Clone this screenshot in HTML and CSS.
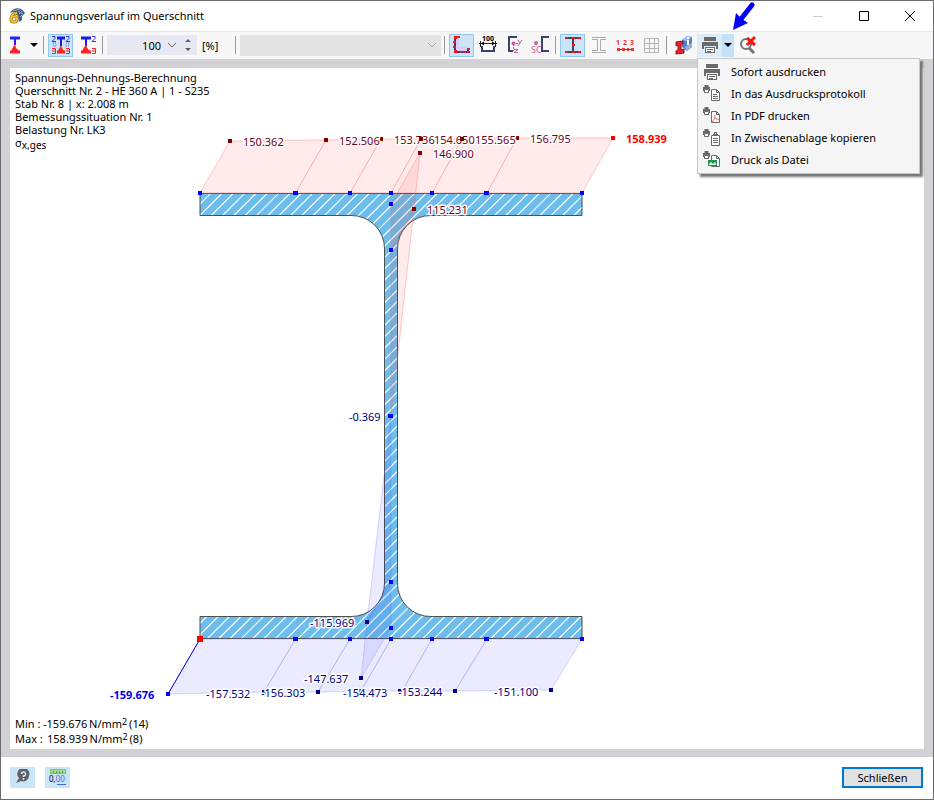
FILE: index.html
```html
<!DOCTYPE html>
<html lang="de">
<head>
<meta charset="utf-8">
<title>Spannungsverlauf im Querschnitt</title>
<link rel="stylesheet" href="styles.css">
</head>
<body>
<svg class="defs" aria-hidden="true">
  <symbol id="printer" viewBox="0 0 18 18">
    <path fill="#696969" d="M3 1h12v4H3zM1 6h16v7h-2v-3H3v3H1zM4 11h10v6H4z"/>
    <path fill="#fff" d="M5 12h8v4H5z"/><path fill="#696969" d="M6 13h6v1H6zM6 15h4v1H6z"/>
  </symbol>
  <symbol id="small-printer" viewBox="0 0 8 8">
    <path fill="#696969" d="M1.500 0h4v2h-4zM0 2h7v4H6V4H1v2H0z"/><path fill="#fff" stroke="#696969" d="M1.500 4.500h4v3h-4z"/>
  </symbol>
  <symbol id="sheet" viewBox="0 0 9 12">
    <path fill="#fff" stroke="#696969" d="M.5.5h5l3 3v8h-8zM5.500.5v3h3"/>
  </symbol>
</svg>
<div class="window">
  <header class="titlebar">
    <svg class="app-icon" width="16" height="16" viewBox="0 0 16 16">
      <path d="M1 5C3 1 8-1 12 1c2 1 3 3 4 4l-3 3v4l-3 2-1-6-5-4z" fill="#41617f"/>
      <path d="M4 3l7-2M9 3l5 3M10 6l3-3M11 9l2-2" stroke="#8fafc9"/>
      <path d="M8 5C4 5 2 8 2 11c0 4 6 4 6 0 0-3-4-3-6-1" fill="none" stroke="#80601a" stroke-width="3"/>
      <path d="M8 5C4 5 2 8 2 11c0 4 6 4 6 0 0-3-4-3-6-1" fill="none" stroke="#f5bd2d" stroke-width="2"/>
    </svg>
    <h1>Spannungsverlauf im Querschnitt</h1>
    <div class="window-buttons">
      <button aria-label="Minimieren" disabled><svg width="12" height="12"><path d="M1 6.500h10" stroke="#ccc"/></svg></button>
      <button aria-label="Maximieren"><svg width="12" height="12"><path d="M1.500 1.500h9v9h-9z" fill="none" stroke="#000"/></svg></button>
      <button aria-label="Fenster schließen"><svg width="12" height="12"><path d="M1 1l10 10M11 1L1 11" stroke="#000"/></svg></button>
    </div>
  </header>

  <div class="toolbar" role="toolbar" aria-label="Werkzeuge">
    <button class="tool" aria-label="Spannung"><svg width="20" height="20"><path d="M5 3h10" stroke="#2222f5" stroke-width="3"/><path d="M10 3v7" stroke="#2222f5" stroke-width="2"/><path d="M5 17h10" stroke="#ff2020" stroke-width="3"/><path d="M10 9l-4 7h8l-3-3z" fill="#ff2020"/></svg></button>
    <button class="drop" aria-label="Spannung wählen"><svg width="8" height="4"><path d="M0 0h8L4 4z"/></svg></button>
    <span class="sep"></span>
    <button class="tool on" aria-label="Verlauf"><svg width="20" height="20"><path d="M6 3h8" stroke="#1919e8" stroke-width="3"/><path d="M10 3v8" stroke="#1919e8" stroke-width="2"/><path d="M6 17h8" stroke="#f22" stroke-width="3"/><path d="M10 10l-3 6h6l-2-3z" fill="#f22"/><path d="M3 7q-2 3 0 5M17 7q2 3 0 5M4 7q2 3 0 5M16 7q-2 3 0 5" fill="none" stroke="#8d9af0"/><g fill="none" stroke="#3333ee"><path d="M1 1.500h3v2L1 6.500h4M15 1.500h3v2l-3 3h4"/></g><g fill="none" stroke="#ff2020"><path d="M1 13.500h3.500v5H1m0-2.500h3M15 13.500h3.500v5H15m0-2.500h3"/></g></svg></button>
    <button class="tool" aria-label="Werte"><svg width="20" height="20" viewBox="-2 0 20 20"><path d="M2 3h10" stroke="#1919e8" stroke-width="3"/><path d="M7 3v8" stroke="#1919e8" stroke-width="2"/><path d="M2 17h10" stroke="#f22" stroke-width="3"/><path d="M7 9l-4 7h8l-3-3z" fill="#f22"/><path d="M13 1.500h3v2l-3 3h4" fill="none" stroke="#3333ee"/><path d="M13 13.500h3.500v5H13m0-2.500h3" fill="none" stroke="#ff2020"/></svg></button>
    <span class="sep"></span>
    <span class="spin">
      <input type="text" value="100" aria-label="Skalierung in Prozent">
      <button aria-label="Skalierung wählen"><svg width="10" height="6"><path d="M1 1l4 4 4-4" fill="none" stroke="#666"/></svg></button>
      <button aria-label="Skalierung ändern"><svg width="6" height="12"><path d="M0 3h6L3 0zM0 9h6l-3 3z" fill="#606060"/></svg></button>
    </span>
    <span class="unit">[%]</span>
    <span class="sep"></span>
    <span class="combo"><select aria-label="Auswahl" disabled><option></option></select><svg width="10" height="6"><path d="M1 1l4 4 4-4" fill="none" stroke="#aaa"/></svg></span>
    <span class="sep"></span>
    <button class="tool on" aria-label="Umriss"><svg width="20" height="20"><path d="M2 2h5v10h9v6H2z" fill="#d9ccff"/><path d="M6 2H3v15h13v-3" fill="none" stroke="#34407a" stroke-width="2"/><path d="M2 1h3v3H2zM5 1h3v2H5zM1 6h3v2H1zM1 11h3v2H1zM2 15h3v3H2zM7 16h3v2H7zM11 16h3v2h-3zM15 13h3v2h-3zM15 16h3v2h-3z" fill="#e91919"/></svg></button>
    <button class="tool" aria-label="Bemaßung"><svg width="20" height="20"><path d="M1 8.500h18M2.500 6v6M17.500 6v6" stroke="#222"/><path d="M3 8.500l3-2v4zM17 8.500l-3-2v4z"/><path d="M4 11v5h12v-5" fill="#fff" stroke="#34406b" stroke-width="2"/><text class="tiny" x="10" y="6" text-anchor="middle">100</text></svg></button>
    <button class="tool" aria-label="Hauptachsen"><svg width="20" height="20"><path d="M13 2H5v14h4" fill="none" stroke="#39456d" stroke-width="2"/><path d="M9 8.500h6M9.500 9v7" stroke="#cd5f9c" stroke-dasharray="2 1"/><circle cx="9.500" cy="8.500" r="2" fill="#cd5f9c"/><path d="M14 5l2 3 2-3M16 8l-2 3M10 14.500h4l-4 3h4" fill="none" stroke="#cd5f9c"/></svg></button>
    <button class="tool" aria-label="Schubmittelpunkt"><svg width="20" height="20"><path d="M19 2h-7v14h7" fill="none" stroke="#39456d" stroke-width="2"/><circle cx="6" cy="8" r="2" fill="#cd5f9c"/><text class="sc" x="1" y="18">SC</text></svg></button>
    <span class="sep"></span>
    <button class="tool on" aria-label="Spannungspunkte"><svg width="20" height="20"><path d="M3 3h14M3 17h14M10 3v14" stroke="#39456d" stroke-width="2"/><path d="M2 2h3v2H2zM9 2h3v2H9zM15 2h3v2h-3zM9 9h3v2H9zM2 16h3v2H2zM9 16h3v2H9zM15 16h3v2h-3z" fill="#f11"/></svg></button>
    <button class="tool" aria-label="Profil"><svg width="20" height="20"><path d="M3 2.500h14M3 4.500h5.500v11H3M17 4.500h-5.500v11H17M3 17.500h14" fill="none" stroke="#aaa"/></svg></button>
    <button class="tool" aria-label="Nummerierung"><svg width="20" height="20"><path d="M2 14.500h16" stroke="#39456d"/><path d="M2 13h3v3H2zM7 13h3v3H7zM12 13h2v3h-2zM16 13h3v3h-3z" fill="#e33"/><text class="red-number" x="1" y="10">1</text><text class="red-number" x="8" y="10">2</text><text class="red-number" x="15" y="10">3</text></svg></button>
    <button class="tool" aria-label="Raster"><svg width="20" height="20"><path d="M3.500 3.500h14v14h-14zM8.500 3v15M13.500 3v15M3 8.500h15M3 13.500h15" fill="none" stroke="#b5b5b5"/></svg></button>
    <span class="sep"></span>
    <button class="tool" aria-label="Querschnittsinformation"><svg width="20" height="20"><path d="M8 5l5-4 5 1v10l-5 4-5-4z" fill="#5184cf"/><path d="M8 5l5-4 5 1-5 4z" fill="#9dc0ef"/><path d="M11 12l7-4v4l-5 4z" fill="#97afe2"/><path d="M13 3h2M14 5v5" stroke="#fff" stroke-width="2"/><path d="M2 7l7-1v3l-2 1v5l3-1v4l-8 1v-3l2-1v-5l-2 1z" fill="#ef2222" stroke="#7d1730"/></svg></button>
    <span class="print">
      <button class="print-main" aria-label="Drucken"><svg width="18" height="18"><use href="#printer"/></svg></button><button class="print-drop" aria-label="Druckmenü" aria-expanded="true"><svg width="8" height="4"><path d="M0 0h8L4 4z"/></svg></button>
      <svg class="pointer" width="24" height="30" viewBox="0 0 24 30"><path d="M21 4L10 18" stroke="#0000f5" stroke-width="5" stroke-linecap="round"/><path d="M2 29L5 12l6 6 6 4z" fill="#0000f5"/></svg>
      <span class="menu" role="menu">
        <button role="menuitem"><svg width="18" height="18"><use href="#printer"/></svg>Sofort ausdrucken</button>
        <button role="menuitem"><svg width="18" height="18"><use href="#small-printer" width="8" height="8"/><use href="#sheet" x="8" y="4" width="9" height="12"/><path d="M10 9.500h4M10 11.500h5M10 13.500h5" stroke="#696969"/></svg>In das Ausdrucksprotokoll</button>
        <button role="menuitem"><svg width="18" height="18"><use href="#small-printer" width="8" height="8"/><use href="#sheet" x="8" y="4" width="9" height="12"/><path d="M12 8v3l-3 4M12 11l4 2" fill="none" stroke="#f66"/></svg>In PDF drucken</button>
        <button role="menuitem"><svg width="18" height="18"><use href="#small-printer" width="8" height="8"/><path d="M8.500 6.500h8v10h-8z" fill="#fff" stroke="#696969"/><path d="M10 7V5h1V3h3v2h1v2z" fill="#696969"/><path d="M12 4h1v1h-1z" fill="#fff"/><path d="M10 9.500h5M10 11.500h5M10 13.500h5" stroke="#696969"/></svg>In Zwischenablage kopieren</button>
        <button role="menuitem"><svg width="18" height="18"><use href="#small-printer" width="8" height="8"/><use href="#sheet" x="8" y="4" width="9" height="12"/><path d="M5 9h9v6H5z" fill="#269157"/><path d="M6 13l2-2 2 2 2-2 1 2v1H6z" fill="#d9f3dd"/></svg>Druck als Datei</button>
      </span>
    </span>
    <button class="tool" aria-label="Auswahl zurücksetzen"><svg width="20" height="20"><circle cx="8" cy="9" r="5" fill="none" stroke="#737373" stroke-width="2"/><path d="M11 13l5 5" stroke="#737373" stroke-width="3"/><path d="M8 9h4l-2-2" fill="none" stroke="#737373"/><path d="M9 3l8 7M17 2l-8 8" stroke="#f21616" stroke-width="3"/></svg></button>
  </div>

  <main class="stage">
    <div class="canvas">
      <svg class="diagram" viewBox="10 68 914 681" preserveAspectRatio="xMinYMin meet" role="img" aria-label="Spannungsverlauf am Profil HE 360 A">
        <defs>
          <pattern id="hatch" width="34" height="34" patternUnits="userSpaceOnUse"><rect width="34" height="34" fill="#6cbdeb"/><path d="M-2 9.300L9.300-2M-2 20.700L20.700-2M-2 32L32-2M5.300 36L36 5.300M16.700 36L36 16.700M28 36L36 28" stroke="#fff" stroke-width="1.200"/></pattern>
        </defs>
        <path class="profile" d="M200 193.500H582V215.500H431A33 33 0 0 0 397.500 249V583A33 33 0 0 0 431 616.500H582V638.500H200V616.500H351A33 33 0 0 0 384.500 583V249A33 33 0 0 0 351 215.500H200Z"/>
        <g class="tension">
          <path d="M200 193L230 141 326 140 381 139 421 139 462 139 517 138 613 138 582 193Z"/>
          <path d="M391 204L420 153 414 209 391 416Z"/>
          <path class="rib" d="M295.500 193L326 140M350 193L381 139M391 193L421 139M432 193L462 139M487 193L517 138M391 250L414 209"/>
        </g>
        <g class="pressure">
          <path d="M200 639L168 694 264 692 318 692 361 691 402 691 455 691 551 690 582 639Z"/>
          <path d="M391 416L367 622 361 678 391 628Z"/>
          <path class="rib" d="M295.500 639L264 692M350 639L318 692M391 639L361 691M432 639L402 691M487 639L455 691M391 582L367 622"/>
          <path class="limit" d="M200 639L168 694"/>
        </g>
        <path fill="#800000" d="M228 139h4v4h-4zM324 138h4v4h-4zM379 137h4v4h-4zM515 136h4v4h-4zM418 151h4v4h-4zM412 207h4v4h-4z"/>
        <path fill="#000080" d="M262 690h4v4h-4zM316 690h4v4h-4zM359 689h4v4h-4zM398 689h4v4h-4zM453 689h4v4h-4zM549 688h4v4h-4zM359 676h4v4h-4zM365 620h4v4h-4z"/>
        <path fill="#0000f5" d="M198 191h4v4h-4zM293 191h5v4h-5zM348 191h4v4h-4zM389 191h4v4h-4zM430 191h4v4h-4zM484 191h5v4h-5zM580 191h4v4h-4zM389 202h4v4h-4zM389 248h4v4h-4zM388 414h5v4h-5zM389 580h4v4h-4zM389 626h4v4h-4zM293 637h5v4h-5zM348 637h4v4h-4zM389 637h4v4h-4zM430 637h4v4h-4zM484 637h5v4h-5zM580 637h4v4h-4zM166 692h4v4h-4z"/>
        <path fill="red" d="M611 136h4v4h-4zM197 636h6v6h-6z"/>
        <g class="values tension-values">
          <text x="243" y="146">150.362</text><text x="339" y="145">152.506</text><text x="394" y="144">153.736</text><text x="434" y="144">154.650</text><text x="475" y="144">155.565</text><text x="530" y="143">156.795</text><text class="max" x="626" y="143">158.939</text><text x="433" y="158">146.900</text><text x="427" y="214">115.231</text>
        </g>
        <path fill="#800000" d="M419 137h4v4h-4zM460 137h4v4h-4z"/>
        <g class="values pressure-values">
          <text x="349" y="421">-0.369</text><text x="310" y="627">-115.969</text><text x="304" y="683">-147.637</text><text class="min" x="110" y="699">-159.676</text><text x="206" y="698">-157.532</text><text x="261" y="697">-156.303</text><text x="343" y="697">-154.473</text><text x="398" y="696">-153.244</text><text x="494" y="696">-151.100</text>
        </g>
      </svg>
      <div class="info">Spannungs-Dehnungs-Berechnung<br>Querschnitt Nr. 2 - HE 360 A | 1 - S235<br>Stab Nr. 8 | x: 2.008 m<br>Bemessungssituation Nr. 1<br>Belastung Nr. LK3<br>σ<sub>x,ges</sub></div>
      <dl class="extremes">
        <dt>Min :</dt><dd>-159.676&thinsp;N/mm<sup>2</sup>&thinsp;(14)</dd>
        <dt>Max :</dt><dd class="positive">158.939&thinsp;N/mm<sup>2</sup>&thinsp;(8)</dd>
      </dl>
    </div>
  </main>

  <footer class="footer">
    <button class="foot-tool" aria-label="Hilfe"><svg width="16" height="16"><path d="M14 7a6 6 0 0 1-8 5l-5 2 3-5a6 6 0 1 1 10-2z" fill="#606060"/><path d="M6.500 5q0-2 2-2t2 2-2 2v1M8.500 9v2" fill="none" stroke="#d5e7f7" stroke-width="1.500"/></svg></button>
    <button class="foot-tool" aria-label="Einheiten"><svg width="18" height="18"><path d="M1.500 1.500h15v4h-15z" fill="#9fe08b" stroke="#78c463"/><path d="M4.500 3v2M7.500 3v2M10.500 3v2M13.500 3v2" stroke="#58964b"/><text class="unit-zero" x="0" y="14">0,<tspan fill="#4169e1">00</tspan></text><path d="M8 16.500h9" stroke="#4169e1"/></svg></button>
    <button class="close">Schließen</button>
  </footer>
</div>
</body>
</html>
```

FILE: styles.css
```css
* { box-sizing: border-box; }
body { margin: 0; font-family: "Noto Sans", "Open Sans", sans-serif; font-size: 11px; line-height: 13px; color: #000; }
button { padding: 0; border: 0; background: none; color: inherit; font: inherit; display: flex; align-items: center; justify-content: center; }
svg { display: block; flex: none; }
.defs { position: absolute; width: 0; height: 0; }
.window { min-height: 100vh; display: flex; flex-direction: column; border: 1px solid #6b6b6e; background: #fff; }

.titlebar { height: 30px; display: flex; align-items: center; padding: 0 8px; gap: 5px; }
.titlebar h1 { margin: 0; font-size: 11px; line-height: 16px; font-weight: 400; }
.window-buttons { margin-left: auto; display: flex; }
.window-buttons button { width: 46px; height: 29px; }
.window-buttons button:last-child { width: 30px; margin-left: 8px; }

.toolbar { height: 28px; display: flex; align-items: center; gap: 1px; padding: 0 0 1px 1px; background: #f7f7f7; border-top: 1px solid #e5e5e5; }
.tool { flex: none; width: 25px; height: 23px; }
.on { background: #cce4f7; border: 1px solid #92c7f0; }
.drop { width: 12px; height: 23px; }
.sep { flex: none; width: 1px; height: 18px; margin: 0 3px 0 2px; background: #999; }
.spin { flex: none; width: 90px; height: 20px; display: flex; align-items: center; background: #e8e8f2; }
.spin input { width: 54px; padding: 0; border: 0; background: transparent; font: inherit; text-align: right; }
.spin button { width: 16px; height: 20px; }
.spin button:first-of-type { margin-left: 3px; }
.unit { width: 34px; padding-left: 4px; }
.combo { flex: none; display: grid; align-items: center; width: 201px; height: 21px; background: #e4e4e4; }
.combo > * { grid-area: 1 / 1; }
.combo select { width: 100%; height: 100%; border: 0; appearance: none; background: transparent; }
.combo svg { justify-self: end; margin-right: 4px; }
.tiny { font-size: 7px; font-weight: 700; }
.sc { font-size: 9px; fill: #cd5f9c; }
.red-number { font-size: 7px; font-weight: 700; fill: #e33; }

.print { position: relative; display: flex; flex: none; width: 37px; height: 23px; }
.print-main { width: 25px; background: #dcebf7; }
.print-drop { width: 12px; background: #c4e1f7; }
.pointer { position: absolute; z-index: 3; left: 34px; bottom: 26px; }
.menu { position: absolute; z-index: 2; left: 0; top: 24px; width: 223px; padding: 2px 0; border: 1px solid #c7c7c7; background: #f5f5f5; box-shadow: 3px 3px 2px #777; }
.menu button { width: 100%; height: 22px; justify-content: flex-start; gap: 10px; padding-left: 5px; text-align: left; }

.stage { flex: 1; display: flex; padding: 9px; padding-bottom: 8px; background: #d2d1d6; }
.canvas { flex: 1; display: grid; background: #fff; }
.canvas > * { grid-area: 1 / 1; }
.diagram { width: 100%; height: auto; }
.info { padding: 3px 5px; align-self: start; }
.info sub { font-size: 10px; line-height: 0; vertical-align: -2px; }
.profile { fill: url(#hatch); stroke: #505050; }
.tension path { fill: rgb(255 0 0 / 8%); stroke: rgb(255 100 100 / 35%); }
.pressure path { fill: rgb(0 0 255 / 8%); stroke: rgb(100 100 255 / 25%); }
.tension .rib, .pressure .rib { fill: none; }
.tension .rib { stroke: rgb(255 90 90 / 45%); }
.pressure .rib { stroke: rgb(90 90 255 / 40%); }
.pressure .limit { stroke: #0000df; }
.values { stroke: #fff; stroke-width: 3px; stroke-linejoin: round; paint-order: stroke; }
.tension-values { fill: #720018; }
.pressure-values { fill: #000080; }
.max { fill: red; font-weight: 700; }
.min { fill: #0000f0; font-weight: 700; }
.extremes { align-self: end; margin: 0; padding: 0 5px 3px; display: grid; grid-template-columns: 28px max-content; line-height: 15px; }
.extremes dd { margin: 0; }
.extremes .positive { padding-left: 4px; }
.extremes sup { font-size: 9px; line-height: 0; vertical-align: 3px; }

.footer { height: 42px; display: flex; align-items: center; padding: 0 10px 2px 9px; gap: 10px; }
.foot-tool { width: 25px; height: 21px; background: #cce4f7; }
.unit-zero { font-size: 8px; }
.close { width: 81px; height: 21px; margin-left: auto; border: 2px solid #0078d7; background: #e1e1e1; }
```
